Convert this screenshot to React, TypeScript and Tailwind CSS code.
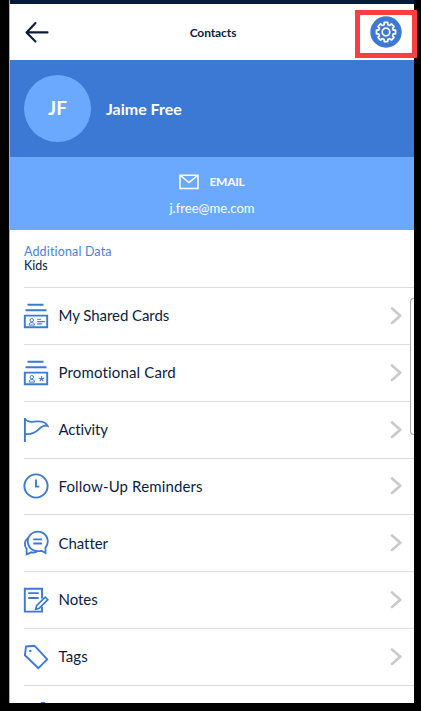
import React from 'react'

const iconProps = {
  viewBox: '0 0 26 26',
  fill: 'none',
  stroke: '#3c79d5',
  strokeWidth: 1.7,
  className: 'h-[26px] w-[26px] shrink-0',
}

function Stack() {
  return (
    <>
      <path d="M4.5 1.7h16M2.5 7.2h21" strokeWidth="2" />
      <path d="M1.8 12.6h22.4v11.6H1.8z" strokeWidth="1.9" />
      <circle cx="8.8" cy="17.2" r="1.7" strokeWidth="1" />
      <path d="M6.1 22.1c.1-1.8 1-2.6 2.7-2.6s2.600.8 2.700 2.600z" strokeWidth="1" />
    </>
  )
}

function SharedCardsIcon() {
  return (
    <svg {...iconProps}>
      <Stack />
      <path d="M14.2 16.3H18M14.2 18.6h7.6M14.2 20.9H19" strokeWidth="1.1" />
    </svg>
  )
}

function PromoCardIcon() {
  return (
    <svg {...iconProps}>
      <Stack />
      <path d="M18.5 18.9v-3M18.5 18.9l2.8-.9M18.5 18.9l1.7 2.4M18.5 18.9l-1.7 2.4M18.5 18.9l-2.8-.9" strokeWidth="1.1" />
    </svg>
  )
}

function FlagIcon() {
  return (
    <svg {...iconProps}>
      <path d="M1.9 1v24" strokeWidth="1.9" />
      <path d="M2 1.8c1.8 2.6 4.8 3.3 9 2.9 5.3-.6 9.5-.5 11.8 2 .9.9 1.3 1.6 1.7 2.3-3.6-1.4-6 .5-8.6 3.1-3.4 3.5-7.3 5.600-13.900 5" strokeWidth="1.8" />
    </svg>
  )
}

function ClockIcon() {
  return (
    <svg {...iconProps}>
      <circle cx="13" cy="13" r="11.6" strokeWidth="1.9" />
      <path d="M13 6.5v7.1h3.3" strokeWidth="1.9" />
    </svg>
  )
}

function ChatIcon() {
  return (
    <svg {...iconProps}>
      <path d="M22.5 23v-5.400A10 9.800 0 1 0 14.500 21.200c1.500 0 2.800 0 4-.4z" strokeWidth="1.8" />
      <path d="M5.4 7.8C1.1 11 .8 15.4 3.6 18.7v5.6l4.8-2c2.2.6 4.5.2 6.2-1.2" strokeWidth="1.8" />
      <path d="M10.3 9.3h8.8M10.3 13.5h8.8" strokeWidth="1.8" />
    </svg>
  )
}

function NotesIcon() {
  return (
    <svg {...iconProps}>
      <path d="M19 11.5V1.8H1.8v22.8H19v-4.8" strokeWidth="1.9" />
      <path d="M5.2 6.2h10.5M5.2 11h10.5" strokeWidth="1.8" />
      <path d="M13.6 18.7l8.6-8.600 2.600 2.600-8.600 8.600-3.500 1z" />
    </svg>
  )
}

function TagIcon() {
  return (
    <svg {...iconProps}>
      <path d="M3 2.5l8.7-.7 12.6 13.5-8.9 8.9L1.9 11.3z" strokeWidth="1.9" strokeLinejoin="round" />
      <circle cx="7.3" cy="6.9" r="1.2" fill="#3c79d5" stroke="none" />
    </svg>
  )
}

function ClipIcon() {
  return (
    <svg {...iconProps}>
      <circle cx="20" cy="4" r="3.2" fill="#3c79d5" stroke="none" />
    </svg>
  )
}

// Outline of an eight-tooth gear centred on 0,0
const gearOutline = Array.from({ length: 8 }, (_, i) =>
  [
    [-0.25, 7.6],
    [-0.19, 9.7],
    [0.19, 9.7],
    [0.25, 7.6],
  ].map(([offset, r]) => {
    const a = (i * Math.PI) / 4 + offset
    return `${(r * Math.sin(a)).toFixed(2)},${(-r * Math.cos(a)).toFixed(2)}`
  })
)
  .flat()
  .join(' ')

const rows = [
  { name: 'My Shared Cards', icon: SharedCardsIcon, tracking: 'tracking-[-0.06px]' },
  { name: 'Promotional Card', icon: PromoCardIcon, tracking: 'tracking-[0.15px]' },
  { name: 'Activity', icon: FlagIcon, tracking: 'tracking-[-0.15px]' },
  { name: 'Follow-Up Reminders', icon: ClockIcon, tracking: 'tracking-[0.14px]' },
  { name: 'Chatter', icon: ChatIcon, tracking: 'tracking-[-0.05px]' },
  { name: 'Notes', icon: NotesIcon, tracking: 'tracking-[-0.05px]' },
  { name: 'Tags', icon: TagIcon, tracking: 'tracking-[0.1px]' },
]

export default function App() {
  return (
    <div className="relative h-[711px] w-[421px] overflow-hidden bg-black pl-[9px] font-['Lato','Open_Sans',sans-serif] text-[#0b1d3f]">
      <div className="flex h-[703px] w-[405px] flex-col overflow-hidden border-l border-[#a9adb4] bg-white">
        <div className="h-1 shrink-0 bg-[#061b3b]" />
        <header className="grid h-14 shrink-0 grid-cols-[1fr_auto_1fr] items-center pl-[14px] pr-[12px]">
          <svg viewBox="0 0 26 22" fill="none" stroke="#0b1d3f" strokeWidth="2.1" strokeLinecap="round" strokeLinejoin="round" className="h-[22px] w-[26px]">
            <path d="M23.5 11.4H2.5M11.5 2L2.5 11.4l9 9.1" />
          </svg>
          <h1 className="pt-px text-[12px] font-bold leading-4 tracking-[-0.1px]">Contacts</h1>
          <svg viewBox="-16 -16 32 32" fill="none" stroke="white" strokeWidth="1.7" strokeLinejoin="round" className="h-8 w-8 justify-self-end">
            <circle r="15.7" fill="#3c79d5" stroke="none" />
            <polygon points={gearOutline} />
            <circle r="3.8" />
          </svg>
        </header>

        <section className="flex h-[97px] shrink-0 items-center bg-[#3c79d5] pl-[14px] text-white">
          <div className="flex h-[67px] w-[67px] items-center justify-center rounded-full bg-[#6ba9ff] text-[19px] font-bold">JF</div>
          <h2 className="ml-[15px] text-base font-bold">Jaime Free</h2>
        </section>

        <section className="flex h-[73px] shrink-0 flex-col items-center bg-[#6ba9ff] pt-4 text-white">
          <div className="flex h-[18px] items-center gap-[10px]">
            <svg viewBox="0 0 20 16" fill="none" stroke="white" strokeWidth="1.5" className="h-4 w-5">
              <path d="M1 1.2h18v13.3H1zM1 1.2l9 7.3 9-7.3" />
            </svg>
            <span className="text-[12px] font-bold tracking-[-0.25px]">EMAIL</span>
          </div>
          <span className="mt-[8px] text-[13px] leading-[18px] tracking-[0.05px]">j.free@me.com</span>
        </section>

        <section className="h-[57px] shrink-0 pl-[14px] pt-[15px] text-[12.5px] leading-[14px]">
          <p className="tracking-[0.15px] text-[#4b83d4]">Additional Data</p>
          <p>Kids</p>
        </section>

        <ul className="ml-[14px]">
          {rows.map(({ name, icon: Icon, tracking }) => (
            <li key={name} className="flex h-[56.85px] items-center border-t border-[#dcdde2] pr-3">
              <span className="-ml-px flex">
                <Icon />
              </span>
              <span className={`mb-px ml-[9.5px] flex-1 text-[15px] ${tracking}`}>{name}</span>
              <svg viewBox="0 0 12 18" fill="none" stroke="#c9c9ce" strokeWidth="2.6" strokeLinecap="round" strokeLinejoin="round" className="h-[18px] w-3">
                <path d="M2 1.5l8.3 7.2L2 16" />
              </svg>
            </li>
          ))}
          <li className="flex h-[57px] items-start border-t border-[#dcdde2] pt-[15px]">
            <span className="-ml-px flex">
              <ClipIcon />
            </span>
          </li>
        </ul>
      </div>

      {/* edge panel handle */}
      <div className="absolute left-[410px] top-[298px] h-[137px] w-1 rounded-l-[4px] border border-r-0 border-[#a7a7a9] bg-white" />
      {/* settings highlight */}
      <div className="absolute left-[355px] top-[10px] h-12 w-[62px] border-[5px] border-[#fc3d42]" />
    </div>
  )
}
